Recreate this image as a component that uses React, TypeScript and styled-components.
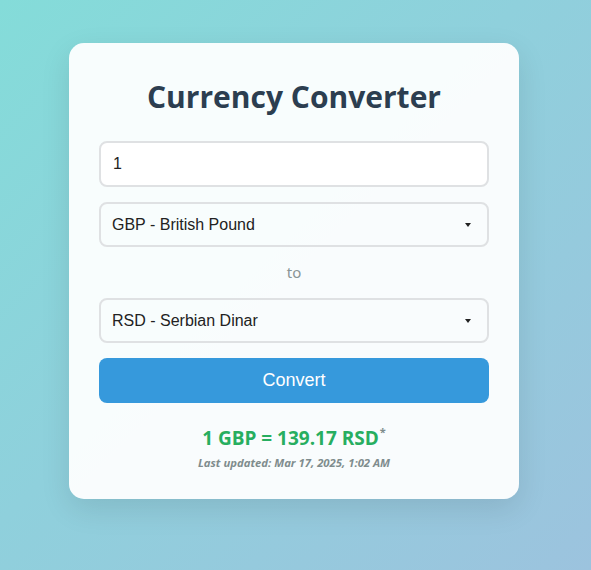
import React from "react";
import styled, { createGlobalStyle } from "styled-components";

const Global = createGlobalStyle`
  html, body { margin: 0; padding: 0; }
  body {
    min-height: 570px;
    background: linear-gradient(135deg, #84dcd9 0%, #8fd0dc 45%, #9cc3de 100%);
    font-family: "Liberation Sans", Arial, sans-serif;
  }
`;

const Page = styled.div`
  display: flex;
  justify-content: center;
  padding: 43px 0 0 0;
  min-height: 570px;
  box-sizing: border-box;
`;

const Card = styled.div`
  width: 450px;
  box-sizing: border-box;
  margin-left: -3px;
  padding: 30px;
  background: rgba(255, 255, 255, 0.94);
  border-radius: 15px;
  box-shadow: 0 10px 30px rgba(0, 0, 0, 0.1);
  display: flex;
  flex-direction: column;
  height: 456px;
`;

const Title = styled.h1`
  margin: 0 0 24px 0;
  padding-top: 4px;
  font-family: "Open Sans", "Noto Sans", sans-serif;
  font-weight: 700;
  font-size: 30px;
  line-height: 40px;
  color: #2c3e50;
  text-align: center;
`;

const Field = styled.div`
  display: flex;
  flex-direction: column;
  gap: 15px;
`;

const Input = styled.input`
  box-sizing: border-box;
  width: 100%;
  height: 46px;
  padding: 0 12px;
  border: 2px solid #dfe1e3;
  border-radius: 8px;
  background: #fff;
  font-family: "Liberation Sans", Arial, sans-serif;
  font-size: 16px;
  color: #222;
  outline: none;
`;

const SelectWrap = styled.div`
  position: relative;
`;

const Select = styled.select`
  box-sizing: border-box;
  width: 100%;
  height: 45px;
  padding: 0 11px;
  border: 2px solid #dfe1e3;
  border-radius: 8px;
  background: transparent;
  font-family: "Liberation Sans", Arial, sans-serif;
  font-size: 16px;
  color: #222;
  appearance: none;
  -webkit-appearance: none;
  outline: none;
`;

const Arrow = styled.span`
  position: absolute;
  right: 18px;
  top: 50%;
  margin-top: -2px;
  width: 0;
  height: 0;
  border-left: 3.5px solid transparent;
  border-right: 3.5px solid transparent;
  border-top: 4px solid #222;
  pointer-events: none;
`;

const To = styled.div`
  text-align: center;
  font-family: "Noto Sans", "Open Sans", sans-serif;
  font-size: 15px;
  line-height: 21px;
  color: #8a9596;
`;

const Button = styled.button`
  height: 45px;
  border: none;
  border-radius: 8px;
  background: #3699dc;
  color: #fff;
  font-family: "Liberation Sans", Arial, sans-serif;
  font-size: 18px;
  cursor: pointer;
`;

const Result = styled.div`
  margin-top: 23px;
  text-align: center;
  font-family: "Open Sans", "Noto Sans", sans-serif;
  font-weight: 700;
  font-size: 19px;
  line-height: 24px;
  color: #27ae60;
`;

const Star = styled.sup`
  font-size: 11px;
  color: #7f8c8d;
  margin-left: 1px;
  vertical-align: 9px;
  line-height: 0;
`;

const Updated = styled.div`
  margin-top: 6px;
  text-align: center;
  font-family: "Open Sans", "Noto Sans", sans-serif;
  font-style: italic;
  font-weight: 700;
  font-size: 11.3px;
  line-height: 14px;
  color: #7f8c8d;
`;

export default function App() {
  return (
    <>
      <Global />
      <Page>
        <Card>
          <Title>Currency Converter</Title>
          <Field>
            <Input type="number" defaultValue="1" />
            <SelectWrap>
              <Select defaultValue="GBP">
                <option value="GBP">GBP - British Pound</option>
              </Select>
              <Arrow />
            </SelectWrap>
            <To>to</To>
            <SelectWrap>
              <Select defaultValue="RSD">
                <option value="RSD">RSD - Serbian Dinar</option>
              </Select>
              <Arrow />
            </SelectWrap>
            <Button>Convert</Button>
          </Field>
          <Result>
            1 GBP = 139.17 RSD<Star>*</Star>
          </Result>
          <Updated>Last updated: Mar 17, 2025, 1:02 AM</Updated>
        </Card>
      </Page>
    </>
  );
}
